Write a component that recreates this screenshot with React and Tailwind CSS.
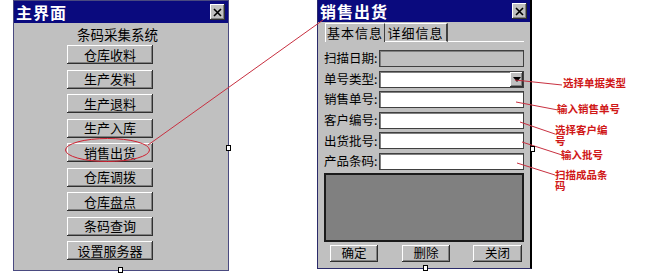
const FONT = { fontFamily: '"Noto Sans CJK SC", "Noto Sans", sans-serif' }

const raised =
  'bg-[#c0c0c0] shadow-[inset_-1px_-1px_#303030,inset_1px_1px_#ffffff,inset_-2px_-2px_#808080]'

function CloseButton() {
  return (
    <div className={`w-[15px] h-[16px] flex items-center justify-center ${raised}`}>
      <svg width="9" height="9" viewBox="0 0 9 9">
        <path d="M1 1L8 8M8 1L1 8" stroke="#000" strokeWidth="1.6" />
      </svg>
    </div>
  )
}

function TitleBar({ title }) {
  return (
    <div className="h-[22px] bg-[#0a0a7e] flex items-center justify-between pl-[2px] pr-[3px]">
      <span className="text-white font-bold text-[16px] leading-none tracking-[1px]">{title}</span>
      <CloseButton />
    </div>
  )
}

function MainWindow() {
  const items = ['仓库收料', '生产发料', '生产退料', '生产入库', '销售出货', '仓库调拨', '仓库盘点', '条码查询', '设置服务器']
  return (
    <div className="absolute left-[13px] top-0 w-[216px] h-[271px] bg-[#c0c0c0] border border-[#4a4a80] flex flex-col">
      <TitleBar title="主界面" />
      <div className="flex flex-col items-start pl-[53px]">
        <div className="ml-[10px] mt-[3px] text-[13.5px] leading-[16px]">条码采集系统</div>
        <div className="mt-[3px] flex flex-col gap-[5.5px]">
          {items.map((t) => (
            <div
              key={t}
              className={`w-[86px] h-[19px] flex items-center justify-center text-[13px] ${raised}`}
            >
              {t}
            </div>
          ))}
        </div>
      </div>
    </div>
  )
}

function Field({ label, disabled, dropdown }) {
  return (
    <div className="h-[17px] flex items-center">
      <div className="w-[55px] text-[12.5px] leading-none whitespace-nowrap">{label}:</div>
      <div
        className={`relative w-[145px] h-[17px] border border-[#404040] shadow-[inset_1px_1px_#808080] ${
          disabled ? 'bg-[#c0c0c0]' : 'bg-white'
        }`}
      >
        {dropdown && (
          <div className={`absolute right-0 top-0 w-[13px] h-[15px] flex items-center justify-center ${raised}`}>
            <svg width="8" height="5" viewBox="0 0 8 5">
              <path d="M0 0H8L4 5Z" fill="#000" />
            </svg>
          </div>
        )}
      </div>
    </div>
  )
}

function SaleWindow() {
  const fields = [
    { label: '扫描日期', disabled: true },
    { label: '单号类型', dropdown: true },
    { label: '销售单号' },
    { label: '客户编号' },
    { label: '出货批号' },
    { label: '产品条码' },
  ]
  return (
    <div className="absolute left-[317px] top-0 w-[215px] h-[269px] bg-[#c0c0c0] border-l border-b border-[#2a2a6a] border-r-2 border-r-black flex flex-col">
      <TitleBar title="销售出货" />
      <div className="px-[6px] flex flex-col">
        <div className="flex ml-[1px] mt-[1px] h-[19px] text-[13px]">
          <div className="w-[60px] flex items-center justify-center border-t border-l border-white border-r border-r-[#404040] tracking-[1px]">
            基本信息
          </div>
          <div className="w-[63px] flex items-center justify-center border-t border-white border-r-2 border-r-[#404040] tracking-[1px] border-b border-b-white">
            详细信息
          </div>
          <div className="flex-1 border-b border-white" />
        </div>
        <div className="pt-[8px] flex flex-col gap-[3.6px]">
          {fields.map((f) => (
            <Field key={f.label} {...f} />
          ))}
        </div>
        <div className="mt-[3px] h-[69px] bg-[#808080] border-2 border-[#1a1a1a]" />
        <div className="mt-[3px] flex h-[17px] text-[12.5px]">
          <div className={`ml-[6px] w-[48px] flex items-center justify-center ${raised}`}>确定</div>
          <div className={`ml-[24px] w-[48px] flex items-center justify-center ${raised}`}>删除</div>
          <div className={`ml-[23px] w-[49px] flex items-center justify-center ${raised}`}>关闭</div>
        </div>
      </div>
    </div>
  )
}

function Note({ x, y, children }) {
  return (
    <div
      className="absolute text-[10.5px] leading-[11px] text-[#d01818] font-semibold"
      style={{ left: x, top: y }}
    >
      {children}
    </div>
  )
}

function Handle({ x, y }) {
  return <div className="absolute w-[5px] h-[6px] bg-white border border-black" style={{ left: x, top: y }} />
}

export default function App() {
  return (
    <div className="relative w-[650px] h-[278px] bg-white overflow-hidden text-black" style={FONT}>
      <MainWindow />
      <SaleWindow />

      <svg className="absolute inset-0 pointer-events-none" width="650" height="278">
        <ellipse cx="107.5" cy="150" rx="42" ry="11.5" fill="none" stroke="#d02030" strokeWidth="1" />
        <line x1="148" y1="145" x2="323" y2="20" stroke="#c83040" strokeWidth="1" />
        <line x1="515" y1="80" x2="562" y2="85" stroke="#c83040" strokeWidth="1" />
        <line x1="516" y1="102" x2="558" y2="110" stroke="#c83040" strokeWidth="1" />
        <line x1="520" y1="122" x2="555" y2="134" stroke="#c83040" strokeWidth="1" />
        <line x1="522" y1="142" x2="562" y2="155" stroke="#c83040" strokeWidth="1" />
        <line x1="517" y1="163" x2="555" y2="175" stroke="#c83040" strokeWidth="1" />
      </svg>

      <Note x={563} y={77}>选择单据类型</Note>
      <Note x={557} y={103}>输入销售单号</Note>
      <Note x={555} y={124}>
        选择客户编
        <br />号
      </Note>
      <Note x={561} y={149}>输入批号</Note>
      <Note x={555} y={169}>
        扫描成品条
        <br />码
      </Note>

      <Handle x={226} y={145} />
      <Handle x={118} y={267} />
      <Handle x={530} y={146} />
      <Handle x={423} y={265} />
    </div>
  )
}
